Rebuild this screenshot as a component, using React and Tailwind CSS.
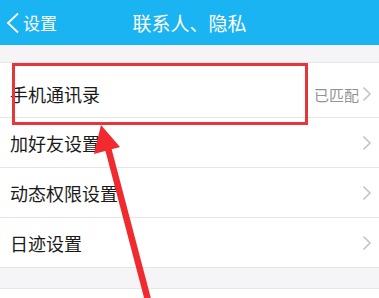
export default function App() {
  const font = { fontFamily: '"Noto Sans CJK SC", "Noto Sans", sans-serif' };
  const Chevron = () => (
    <svg width="10" height="16" viewBox="0 0 10 16" className="shrink-0">
      <polyline points="1.5,1.5 8,8 1.5,14.5" fill="none" stroke="#c4c4c8" strokeWidth="1.6" />
    </svg>
  );
  const Row = ({ label, right, className }) => (
    <div className={"flex items-center justify-between pl-[10px] pr-[7px] bg-white border-b border-[#e6e6e6] " + className}>
      <span className="text-[18px] text-[#1a1a1a] leading-none">{label}</span>
      <div className="flex items-center gap-[3px]">
        {right && <span className="text-[15px] text-[#939393] leading-none">{right}</span>}
        <Chevron />
      </div>
    </div>
  );
  return (
    <div className="relative w-[379px] h-[298px] overflow-hidden bg-[#f5f5f7]" style={font}>
      <div className="relative h-[45px] bg-[#19b4f1] flex items-center">
        <div className="flex items-center pl-[5px] gap-[2px] text-white">
          <svg width="16" height="22" viewBox="0 0 16 22">
            <polyline points="13,1.5 3,11 13,20.5" fill="none" stroke="#ffffff" strokeWidth="1.8" />
          </svg>
          <span className="text-[17px] leading-none">设置</span>
        </div>
        <div className="absolute inset-0 flex items-center justify-center pointer-events-none">
          <span className="text-white text-[19px] leading-none">联系人、隐私</span>
        </div>
      </div>
      <div className="h-[17px]" />
      <div className="border-t border-[#e6e6e6]">
        <Row label="手机通讯录" right="已匹配" className="h-[55px] pt-[8px]" />
        <Row label="加好友设置" className="h-[50px]" />
        <Row label="动态权限设置" className="h-[50px]" />
        <Row label="日迹设置" className="h-[50px]" />
      </div>
      <div className="h-[20px]" />
      <div className="border-t border-[#e6e6e6] bg-white h-[20px]" />

      <div className="absolute left-[12px] top-[63px] w-[296px] h-[62px] border-[3px] border-[#e5363c] pointer-events-none" />
      <svg className="absolute left-0 top-0 pointer-events-none" width="379" height="298" viewBox="0 0 379 298">
        <line x1="108" y1="148" x2="148" y2="300" stroke="#f02a2e" strokeWidth="6.5" />
        <polygon points="101,125 94,154 120,147" fill="#f02a2e" />
      </svg>
    </div>
  );
}
